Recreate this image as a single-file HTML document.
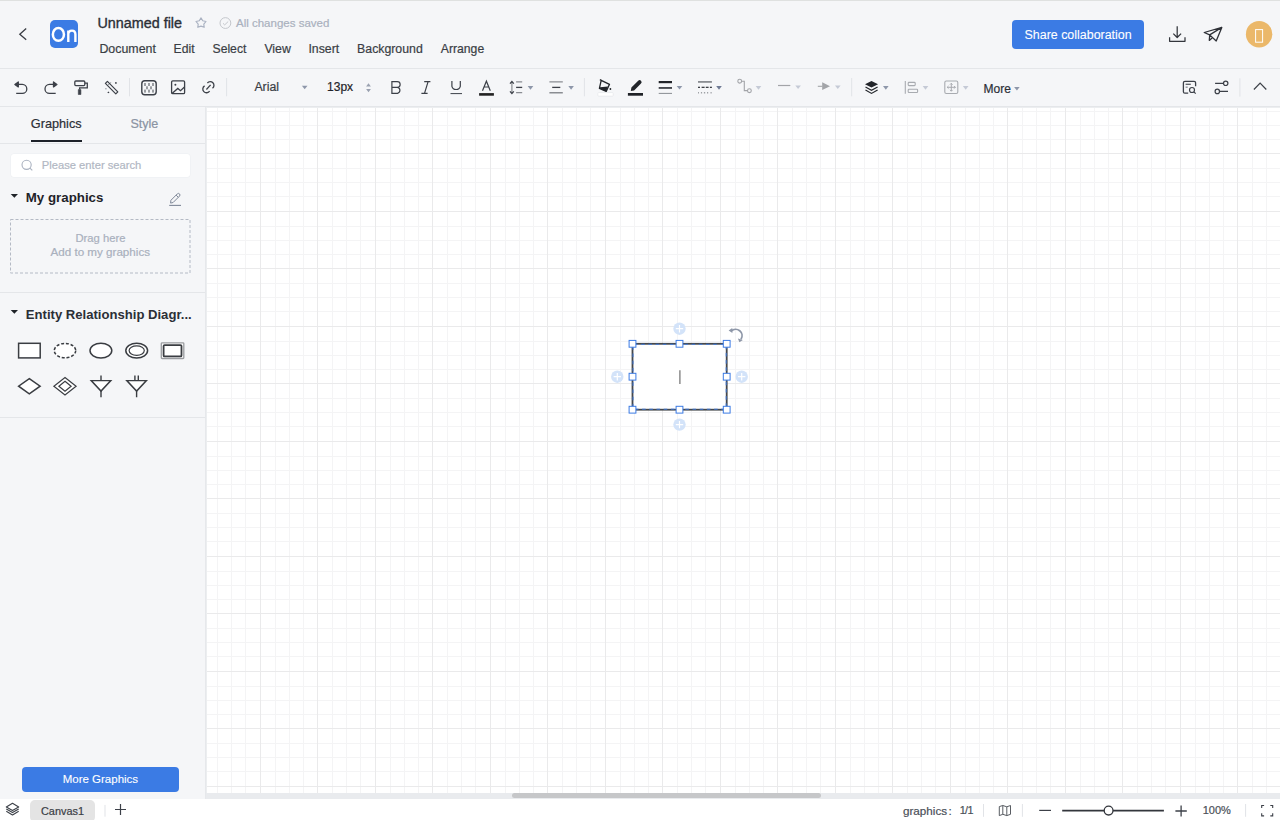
<!DOCTYPE html>
<html><head><meta charset="utf-8">
<style>
*{box-sizing:border-box;margin:0;padding:0}
html,body{width:1280px;height:820px;overflow:hidden;background:#f5f6f8;font-family:"Liberation Sans",sans-serif;color:#2b2f36}
.a{position:absolute}
.t{position:absolute;white-space:nowrap;font-family:"Liberation Sans",sans-serif}
svg{position:absolute;overflow:visible}
.car{position:absolute;width:0;height:0;border-left:2.5px solid transparent;border-right:2.5px solid transparent;border-top:3px solid #8e97aa}
.car.l{border-top-color:#c9cdd8}
.md{-webkit-text-stroke:0.2px currentColor}
.sep{position:absolute;width:1px;background:#e1e3e7}
</style></head><body>
<!-- top line -->
<div class="a" style="left:0;top:0;width:1280px;height:1px;background:#dfe1e0"></div>
<!-- header -->
<div class="a" style="left:0;top:68px;width:1280px;height:1px;background:#e4e6e9"></div>
<div class="a" style="left:0;top:106px;width:1280px;height:1px;background:#e4e6e9"></div>
<svg style="left:0;top:0" width="40" height="60"><path d="M26.2 28.6L19.8 34.2L26.2 39.8" stroke="#3a3d44" stroke-width="1.3" fill="none"/></svg>
<div class="a" style="left:50px;top:20.1px;width:28px;height:28.3px;border-radius:5px;background:#3b7be4;overflow:hidden"></div>
<svg style="left:0;top:0" width="90" height="60"><ellipse cx="58.4" cy="34.45" rx="5.55" ry="6.4" stroke="#fff" stroke-width="2.5" fill="none"/>
<path d="M68.3 30.4V42M68.3 34.6C68.3 32 69.8 30.6 72 30.6C74.3 30.6 75.4 32 75.4 34.6V42" stroke="#fff" stroke-width="2.4" fill="none"/></svg>
<div class="t md" style="left:97.5px;top:15.5px;font-size:14.35px;line-height:14.35px;color:#2b2f36;-webkit-text-stroke:0.35px #2b2f36">Unnamed file</div>
<svg style="left:0;top:0" width="240" height="40"><path d="M201 17.9L202.75 20.8L206 21.5L203.8 24.1L204.2 27.3L201 26.1L197.8 27.3L198.2 24.1L196 21.5L199.25 20.8Z" stroke="#aab2c2" stroke-width="1.15" fill="none" stroke-linejoin="round"/>
<circle cx="225.4" cy="23.05" r="5.4" stroke="#c4c7cc" stroke-width="1" fill="none"/><path d="M223 23.3L224.7 24.9L228.2 21.5" stroke="#c4c7cc" stroke-width="1" fill="none"/></svg>
<div class="t md" style="left:236px;top:17.8px;font-size:11.5px;line-height:11.5px;color:#aab1be">All changes saved</div>
<div class="t md" style="left:99.4px;top:42.9px;font-size:12.4px;line-height:12.4px;color:#3a3e45">Document</div>
<div class="t md" style="left:173.6px;top:42.9px;font-size:12.2px;line-height:12.2px;color:#3a3e45">Edit</div>
<div class="t md" style="left:212.5px;top:42.9px;font-size:12.2px;line-height:12.2px;color:#3a3e45">Select</div>
<div class="t md" style="left:264.4px;top:42.9px;font-size:12.3px;line-height:12.3px;color:#3a3e45">View</div>
<div class="t md" style="left:308.4px;top:42.9px;font-size:12.3px;line-height:12.3px;color:#3a3e45">Insert</div>
<div class="t md" style="left:357.1px;top:42.9px;font-size:12.3px;line-height:12.3px;color:#3a3e45">Background</div>
<div class="t md" style="left:440.8px;top:42.9px;font-size:12.2px;line-height:12.2px;color:#3a3e45">Arrange</div>
<!-- header right -->
<div class="a" style="left:1012px;top:19.8px;width:132.4px;height:28.9px;border-radius:4px;background:#3b7be4"></div>
<div class="t" style="left:1024.5px;top:29.2px;font-size:12.44px;line-height:12.44px;color:#fff;-webkit-text-stroke:0.1px #fff">Share collaboration</div>
<svg style="left:0;top:0" width="1280" height="60">
<path d="M1177.2 26.3V37.5M1173.3 33.6L1177.2 37.5L1181.1 33.6M1169.6 37.3V41.3H1185V37.3" stroke="#33363c" stroke-width="1.25" fill="none" stroke-linejoin="round"/>
<path d="M1204.2 32.5L1221.8 27.4L1216.2 41L1209.7 34.9ZM1221.8 27.4L1209.7 34.9L1209.3 40.4L1212.1 38.1" stroke="#2e3137" stroke-width="1.3" fill="none" stroke-linejoin="round"/>
<circle cx="1259.1" cy="34.2" r="13.2" fill="#ebb86a"/>
<rect x="1255.6" y="29.6" width="7" height="12.6" stroke="#fff" stroke-width="1" fill="none"/>
</svg>
<!-- toolbar -->
<svg style="left:0;top:0" width="1280" height="110">
<g fill="none" stroke="#3c4048" stroke-width="1.3">
<!-- undo -->
<path d="M17.5 84.4H22.3A4.5 4.5 0 0 1 22.3 93.4H16.2"/>
<path d="M14.9 84.4L18.3 81.9V86.9Z" fill="#3c4048" stroke-linejoin="round"/>
<!-- redo -->
<path d="M54.3 84.4H49.5A4.5 4.5 0 0 0 49.5 93.4H55.7"/>
<path d="M56.9 84.4L53.5 81.9V86.9Z" fill="#3c4048" stroke-linejoin="round"/>
<!-- painter -->
<rect x="74.8" y="81" width="10" height="4.6" rx="1"/>
<path d="M84.8 83.2H87.3V87.8H79.6V89.6"/>
<path d="M78.3 89.6H80.9V94.5H78.3Z" fill="#3c4048" stroke-width="0.6"/>
<!-- magic -->
<path d="M105.4 83.4L107.4 81.4L117.8 91.8L115.8 93.8Z" stroke-width="1.2" stroke-linejoin="round"/>
<path d="M108.6 84.6L110.6 82.6" stroke-width="1"/>
</g>
<circle cx="115.9" cy="82.9" r="0.9" fill="#3c4048"/><circle cx="105.9" cy="88.8" r="0.8" fill="#9aa0a8"/>
<path d="M107.3 92.4L108.4 91.5L109.5 92.4L108.4 93.3Z" fill="#3c4048"/>
<line x1="129.5" y1="78" x2="129.5" y2="96.3" stroke="#e1e3e7"/>
<!-- checker -->
<rect x="141.8" y="80.7" width="14.4" height="14" rx="3" fill="none" stroke="#3c4048" stroke-width="1.4"/>
<g fill="#9a9da2"><rect x="144" y="83" width="2" height="3"/><rect x="148" y="83" width="2" height="3"/><rect x="152" y="83" width="2" height="3"/>
<rect x="146" y="86.3" width="2" height="3"/><rect x="150" y="86.3" width="2" height="3"/>
<rect x="144" y="89.6" width="2" height="3"/><rect x="148" y="89.6" width="2" height="3"/><rect x="152" y="89.6" width="2" height="3"/></g>
<!-- image -->
<g fill="none" stroke="#3c4048" stroke-width="1.3">
<rect x="171.6" y="80.8" width="13" height="12.8" rx="1.2"/>
<path d="M172 93.4L177.8 88.4L180.5 90.7L184.5 87"/>
<!-- link -->
<path d="M207.4 83.0A3.7 3.7 0 1 1 212.5 88.3"/>
<path d="M204.6 85.9A3.7 3.7 0 1 0 209.6 91.1"/>
<path d="M206.4 89.5L210.6 84.9"/>
</g>
<circle cx="175.4" cy="84.7" r="1" fill="#3c4048"/>
<line x1="226.6" y1="78" x2="226.6" y2="96.3" stroke="#e1e3e7"/>
<!-- spinner -->
<path d="M366.1 86.4L368.5 83.3L370.9 86.4ZM366.1 89.1L368.5 92.2L370.9 89.1Z" fill="#9aa1b0"/>
<g fill="none" stroke="#3c4048" stroke-width="1.2">
<!-- B -->
<path d="M391.9 81.6H397.3A2.8 2.8 0 0 1 397.3 87.3H391.9ZM391.9 87.3H397.6A3.1 3.1 0 0 1 397.6 93.3H391.9Z"/>
<!-- I -->
<path d="M424.2 81.6H430.4M421.4 93.4H427.6M428.1 81.6L424.5 93.4"/>
<!-- U -->
<path d="M451.9 80.9V86.3A4.35 4.35 0 0 0 460.3 86.3V80.9"/>
<path d="M450.5 93.6H462" stroke-width="1"/>
<!-- A -->
<path d="M482.5 90.8L486.4 81.2L490.3 90.8M484 87H488.8"/>
</g>
<rect x="479.1" y="93.1" width="14.8" height="2.6" fill="#222"/>
<!-- line height -->
<g fill="none" stroke-width="1.2">
<path d="M511.9 82V93" stroke="#8a8d92"/><path d="M510 83.6L511.9 81.5L513.8 83.6M510 91.4L511.9 93.5L513.8 91.4" stroke="#3c4048" stroke-width="1.3"/>
<path d="M516.1 81.8H522.2M516.1 92.7H522.2" stroke="#8a8d92" stroke-width="1.3"/><path d="M516.1 87.4H522.2" stroke="#3c4048" stroke-width="1.3"/>
<!-- align -->
<path d="M549.4 81.9H562.8M549.4 92.7H562.8" stroke="#8a8d92" stroke-width="1.4"/><path d="M552.2 87.4H560.3" stroke="#3c4048" stroke-width="1.3"/>
</g>
<line x1="584.4" y1="78" x2="584.4" y2="96.3" stroke="#e1e3e7"/>
<!-- bucket -->
<g fill="none" stroke="#22252a" stroke-width="1.3" stroke-linejoin="round">
<path d="M601.2 80.3L609.5 84.3L606.2 91.4L599.4 88.3Z"/><path d="M601.2 80.3L599.9 79.6"/>
</g>
<path d="M600 87.2L608 86.5L606.2 91.4L599.4 88.3Z" fill="#22252a"/>
<circle cx="610.4" cy="89" r="0.9" fill="#22252a"/>
<rect x="597.8" y="92.6" width="15.4" height="3.6" rx="0.8" fill="#fff" stroke="#e6e8eb" stroke-width="0.8"/>
<!-- pen -->
<path d="M630.8 90.9L631.4 87.6L638.2 80.8A1.9 1.9 0 0 1 641 83.6L634.1 90.4Z" fill="#22252a"/>
<rect x="627.9" y="93" width="15.1" height="2.7" fill="#1f2227"/>
<!-- line weight -->
<rect x="658.7" y="81" width="13.3" height="2.2" fill="#22252a"/>
<rect x="658.7" y="87.1" width="13.3" height="1.7" fill="#33363c"/>
<rect x="658.7" y="92.9" width="13.3" height="0.9" fill="#7d8187"/>
<!-- dash -->
<rect x="698" y="81" width="13.9" height="1.8" fill="#8a8d92"/>
<g fill="#3c3f45"><rect x="698" y="86.7" width="2" height="1.3"/><rect x="701.6" y="86.7" width="3" height="1.3"/><rect x="705.8" y="86.7" width="2.8" height="1.3"/><rect x="709.9" y="86.7" width="2" height="1.3"/></g>
<g fill="#8a8d92"><rect x="698" y="92.2" width="1" height="1.2"/><rect x="700.9" y="92.2" width="1.2" height="1.2"/><rect x="703.9" y="92.2" width="1.3" height="1.2"/><rect x="707" y="92.2" width="1.2" height="1.2"/><rect x="710.5" y="92.2" width="1.2" height="1.2"/></g>
<!-- connector -->
<g fill="none" stroke="#a2a4a8" stroke-width="1.1">
<circle cx="739.7" cy="81.2" r="1.9"/><circle cx="749.4" cy="90.7" r="1.9"/>
<path d="M741.6 81.3H744.3V90.6H747.5"/>
<!-- line -->
<path d="M778 85.5H790.3" stroke-width="1.2"/>
<path d="M817.8 86.3H822.5"/>
</g>
<path d="M822.2 82.3L830 86.2L822.2 90Z" fill="#a2a4a8"/>
<line x1="851.7" y1="78" x2="851.7" y2="96.3" stroke="#e1e3e7"/>
<!-- layers -->
<path d="M871.5 80.9L878.1 84.3L871.5 87.6L865 84.3Z" fill="#22252a"/>
<path d="M865.5 87L871.5 90.2L877.6 87M865.5 90L871.5 93.4L877.6 90" fill="none" stroke="#22252a" stroke-width="1.2"/>
<!-- align left -->
<g fill="none" stroke="#a8abb0" stroke-width="1.1">
<path d="M905.3 81V93.8"/>
<rect x="908.2" y="82.4" width="7" height="3.2" rx="0.8"/>
<rect x="908.2" y="89.2" width="9.4" height="3.3" rx="0.8"/>
<!-- transform -->
<rect x="944.8" y="81" width="13" height="12.5" rx="1.5"/>
<path d="M951.3 83.3V91.2M947.2 87.3H955.4M950 84.6L951.3 83.3L952.6 84.6M950 89.9L951.3 91.2L952.6 89.9M948.5 86L947.2 87.3L948.5 88.6M954.1 86L955.4 87.3L954.1 88.6" stroke-width="1"/>
</g>
<!-- doc search -->
<g fill="none" stroke="#3c4048" stroke-width="1.3">
<path d="M1195.6 86.2V82.8A1.5 1.5 0 0 0 1194.1 81.3H1184.9A1.5 1.5 0 0 0 1183.4 82.8V91.7A1.5 1.5 0 0 0 1184.9 93.2H1188.2"/>
<path d="M1185.6 84.3H1190.8" stroke="#5a5e65"/><path d="M1185.6 87.2H1187.7" stroke="#8a8e94"/>
<circle cx="1192" cy="90" r="2.5" stroke-width="1.2"/><path d="M1193.9 91.9L1195.7 93.6" stroke-width="1.2"/>
<!-- sliders -->
<path d="M1215.1 83.3H1223.5M1219.5 91.4H1228" stroke-width="1.2"/>
<circle cx="1225.7" cy="83.3" r="2.2" stroke-width="1.2"/><circle cx="1217.3" cy="91.4" r="2.2" stroke-width="1.2"/>
<path d="M1253.9 89.5L1260.1 83.2L1266.3 89.5" stroke-width="1.2"/>
</g>
<line x1="1239.9" y1="78.3" x2="1239.9" y2="96.6" stroke="#e1e3e7"/>
<path d="M301.9 85.7H307.5L304.7 89.3Z" fill="#8e97aa"/>
<path d="M527.7 86.1H533.3L530.5 89.7Z" fill="#8e97aa"/>
<path d="M568.3 86.1H573.9L571.1 89.7Z" fill="#8e97aa"/>
<path d="M676.7 85.9H682.3L679.5 89.5Z" fill="#8e97aa"/>
<path d="M716.2 86.1H721.8L719.0 89.7Z" fill="#6f7a94"/>
<path d="M755.7 86.1H761.3L758.5 89.7Z" fill="#c5cad6"/>
<path d="M795.3 85.5H800.9L798.1 89.1Z" fill="#c5cad6"/>
<path d="M835.0 85.5H840.6L837.8 89.1Z" fill="#c5cad6"/>
<path d="M883.0 86.1H888.6L885.8 89.7Z" fill="#8e97aa"/>
<path d="M922.7 86.1H928.3L925.5 89.7Z" fill="#c5cad6"/>
<path d="M962.9 86.1H968.5L965.7 89.7Z" fill="#c5cad6"/>
<path d="M1014.1 86.9H1019.7L1016.9 90.5Z" fill="#8e97aa"/>
</svg>
<div class="t md" style="left:254.4px;top:80.5px;font-size:12.3px;line-height:12.3px;color:#3a3e45">Arial</div>
<div class="t md" style="left:327.1px;top:80.7px;font-size:12px;line-height:12px;color:#1f2329">13px</div>
<div class="t md" style="left:983.5px;top:83px;font-size:12px;line-height:12px;color:#2b2f36">More</div>
<!-- sidebar -->
<div class="a" style="left:205px;top:107px;width:1px;height:692px;background:#e6e8eb"></div>
<div class="t md" style="left:30.8px;top:117.5px;font-size:12.7px;line-height:12.7px;color:#2b2f36">Graphics</div>
<div class="a" style="left:30.8px;top:140px;width:51px;height:2px;background:#1d2129"></div>
<div class="t md" style="left:130.4px;top:117.5px;font-size:12.55px;line-height:12.55px;color:#8a93a3">Style</div>
<div class="a" style="left:0;top:143px;width:205px;height:1px;background:#e4e6e9"></div>
<div class="a" style="left:11px;top:154px;width:179px;height:22.5px;border-radius:3px;background:#fff;box-shadow:0 0 0 0.5px #eceef1"></div>
<svg style="left:0;top:0" width="205" height="420">
<circle cx="26.6" cy="164.8" r="4.6" stroke="#aab2c0" stroke-width="1.1" fill="none"/><path d="M29.9 168.1L32.3 170.4" stroke="#aab2c0" stroke-width="1.1"/>
<path d="M10.7 194L18 194L14.35 197.7Z" fill="#1f2329"/>
<path d="M170.6 203.1L170.9 200.3L177.3 193.9A1.2 1.2 0 0 1 179.5 196.1L173.1 202.5Z M176.1 195.1L178.3 197.3" stroke="#7f8898" stroke-width="1" fill="none" stroke-linejoin="round"/>
<path d="M169.2 205.4H181" stroke="#7f8898" stroke-width="1.1"/>
<rect x="10.5" y="219.5" width="179.5" height="53.5" fill="none" stroke="#b4bac5" stroke-width="1" stroke-dasharray="3 2"/>
<line x1="0" y1="292.5" x2="205" y2="292.5" stroke="#e4e6e9"/>
<path d="M10.7 310L18 310L14.35 313.7Z" fill="#1f2329"/>
<g fill="#fff" stroke="#3a3d42" stroke-width="1.5">
<rect x="18.6" y="343.3" width="21.6" height="14.6"/>
<ellipse cx="65" cy="350.6" rx="10.7" ry="7.2" stroke-dasharray="3 1.8"/>
<ellipse cx="100.9" cy="350.6" rx="10.9" ry="7.3"/>
<ellipse cx="136.7" cy="350.6" rx="10.9" ry="7.3"/>
<ellipse cx="136.7" cy="350.6" rx="7.6" ry="4.7" stroke-width="1.2"/>
<rect x="161.3" y="342.8" width="22.5" height="15.7" rx="0.8" stroke="#9a9ca0" stroke-width="1.3"/>
<rect x="163.6" y="345.1" width="17.9" height="11.3" rx="1" stroke-width="1.8"/>
<path d="M29.3 378.6L40.1 386.2L29.3 393.8L18.6 386.2Z"/>
<path d="M65 377.5L76.1 386.2L65 395L53.9 386.2Z" stroke-width="1.2"/>
<path d="M65 381.3L71.1 386.2L65 391.2L58.9 386.2Z" stroke-width="1.2"/>
<path d="M91.2 380.6H110.8L101 391.1Z" stroke-width="1.4"/><path d="M101 375.6V380.6M101 391.1V397.2" stroke-width="1.4"/>
<path d="M126.8 380.6H146.4L136.6 391.1Z" stroke-width="1.4"/><path d="M136.6 391.1V397.2M134.9 375.6V380.6M138.3 375.6V380.6" stroke-width="1.4"/>
</g>
<line x1="0" y1="417.5" x2="205" y2="417.5" stroke="#e4e6e9"/>
</svg>
<div class="t md" style="left:41.8px;top:160px;font-size:11.2px;line-height:11.2px;color:#b1b7c3">Please enter search</div>
<div class="t" style="left:25.8px;top:191.3px;font-size:13.3px;line-height:13.3px;color:#1f2329;font-weight:bold">My graphics</div>
<div class="t md" style="left:75.5px;top:233.2px;font-size:11.24px;line-height:11.24px;color:#a9b0bd">Drag here</div>
<div class="t md" style="left:50.5px;top:245.8px;font-size:11.64px;line-height:11.64px;color:#a9b0bd">Add to my graphics</div>
<div class="t" style="left:25.8px;top:307.5px;font-size:13.1px;line-height:13.1px;color:#2b2f36;font-weight:bold">Entity Relationship Diagr...</div>
<div class="a" style="left:22px;top:767px;width:156.5px;height:24.6px;border-radius:4px;background:#3b7be4"></div>
<div class="t" style="left:62.7px;top:773.8px;font-size:11.5px;line-height:11.5px;color:#fff;-webkit-text-stroke:0.1px #fff">More Graphics</div>
<!-- canvas -->
<div class="a" style="left:206px;top:107px;width:1074px;height:686px;background:#fff;overflow:hidden">
<svg width="1074" height="686" style="position:absolute;left:0;top:0"><path d="M11.5 0V686M25.5 0V686M39.5 0V686M69.5 0V686M83.5 0V686M97.5 0V686M126.5 0V686M140.5 0V686M154.5 0V686M184.5 0V686M198.5 0V686M212.5 0V686M241.5 0V686M255.5 0V686M269.5 0V686M299.5 0V686M313.5 0V686M327.5 0V686M356.5 0V686M370.5 0V686M384.5 0V686M414.5 0V686M428.5 0V686M442.5 0V686M471.5 0V686M485.5 0V686M499.5 0V686M529.5 0V686M543.5 0V686M557.5 0V686M586.5 0V686M600.5 0V686M614.5 0V686M644.5 0V686M658.5 0V686M672.5 0V686M701.5 0V686M715.5 0V686M729.5 0V686M759.5 0V686M773.5 0V686M787.5 0V686M816.5 0V686M830.5 0V686M844.5 0V686M874.5 0V686M888.5 0V686M902.5 0V686M931.5 0V686M945.5 0V686M959.5 0V686M989.5 0V686M1003.5 0V686M1017.5 0V686M1046.5 0V686M1060.5 0V686M0 4.5H1074M0 18.5H1074M0 32.5H1074M0 61.5H1074M0 75.5H1074M0 89.5H1074M0 119.5H1074M0 133.5H1074M0 147.5H1074M0 176.5H1074M0 190.5H1074M0 204.5H1074M0 234.5H1074M0 248.5H1074M0 262.5H1074M0 291.5H1074M0 305.5H1074M0 319.5H1074M0 349.5H1074M0 363.5H1074M0 377.5H1074M0 406.5H1074M0 420.5H1074M0 434.5H1074M0 464.5H1074M0 478.5H1074M0 492.5H1074M0 521.5H1074M0 535.5H1074M0 549.5H1074M0 579.5H1074M0 593.5H1074M0 607.5H1074M0 636.5H1074M0 650.5H1074M0 664.5H1074" stroke="#f4f4f5" stroke-width="1" fill="none"/><path d="M54.5 0V686M111.5 0V686M169.5 0V686M226.5 0V686M284.5 0V686M341.5 0V686M399.5 0V686M456.5 0V686M514.5 0V686M571.5 0V686M629.5 0V686M686.5 0V686M744.5 0V686M801.5 0V686M859.5 0V686M916.5 0V686M974.5 0V686M1031.5 0V686M0 46.5H1074M0 104.5H1074M0 161.5H1074M0 219.5H1074M0 276.5H1074M0 334.5H1074M0 391.5H1074M0 449.5H1074M0 506.5H1074M0 564.5H1074M0 621.5H1074M0 679.5H1074" stroke="#eaeaeb" stroke-width="1" fill="none"/></svg>
</div>
<div class="a" style="left:206px;top:793px;width:1074px;height:6px;background:#e9ebee"></div>
<div class="a" style="left:206px;top:107px;width:1074px;height:1px;background:#eceef0"></div>
<div class="a" style="left:206px;top:107px;width:1px;height:686px;background:#eceef0"></div>
<div class="a" style="left:512px;top:793.4px;width:308.6px;height:5px;border-radius:3px;background:#c6c7c9"></div>
<!-- shape -->
<svg style="left:0;top:0" width="1280" height="820">
<rect x="632.5" y="343.8" width="94.2" height="65.9" fill="#fff" stroke="#45484c" stroke-width="1.8"/>
<rect x="633" y="344.3" width="93.2" height="64.9" fill="none" stroke="#3b7be4" stroke-width="0.9" stroke-dasharray="3.6 3.6" stroke-dashoffset="-1"/>
<g fill="#fff" stroke="#3b7be4" stroke-width="1">
<rect x="629.1" y="340.4" width="6.8" height="6.8"/><rect x="676.1" y="340.4" width="6.8" height="6.8"/><rect x="723.3" y="340.4" width="6.8" height="6.8"/>
<rect x="629.1" y="373.3" width="6.8" height="6.8"/><rect x="723.3" y="373.3" width="6.8" height="6.8"/>
<rect x="629.1" y="406.3" width="6.8" height="6.8"/><rect x="676.1" y="406.3" width="6.8" height="6.8"/><rect x="723.3" y="406.3" width="6.8" height="6.8"/>
</g>
<g fill="#d3e3f9"><circle cx="679.5" cy="328.7" r="6.2"/><circle cx="617.3" cy="376.7" r="6.2"/><circle cx="741.7" cy="376.7" r="6.2"/><circle cx="679.5" cy="424.6" r="6.2"/></g>
<path d="M679.5 325V332.4M675.8 328.7H683.2M617.3 373V380.4M613.6 376.7H621M741.7 373V380.4M738 376.7H745.4M679.5 420.9V428.3M675.8 424.6H683.2" stroke="#fff" stroke-width="1.2"/>
<path d="M731.2 331.1A6.4 6.4 0 0 1 741 339.2" stroke="#8e97a8" stroke-width="1.8" fill="none"/>
<path d="M728.6 330.6L732.3 327.9L732.4 333Z M737.9 338.6L742.9 339.9L739.4 342.2Z" fill="#8e97a8"/>
<line x1="679.9" y1="370.2" x2="679.9" y2="383.9" stroke="#7a7a7a" stroke-width="1.3"/>
</svg>
<!-- bottom bar -->
<div class="a" style="left:0;top:799px;width:1280px;height:21px;background:#fff"></div>
<svg style="left:0;top:0" width="1280" height="820">
<g fill="none" stroke="#3c4048" stroke-width="1.1" stroke-linejoin="round">
<path d="M12.5 803.3L18.7 806.9L12.5 810.5L6.3 806.9Z"/>
<path d="M6.3 809L12.5 812.6L18.7 809M6.3 811.3L12.5 814.9L18.7 811.3"/>
</g>
</svg>
<div class="a" style="left:30.4px;top:800.3px;width:64.4px;height:22px;border-radius:5px;background:#e4e4e4"></div>
<div class="t md" style="left:41px;top:805.6px;font-size:10.9px;line-height:10.9px;color:#3a3e45">Canvas1</div>
<svg style="left:0;top:0" width="1280" height="820">
<line x1="105" y1="804.9" x2="105" y2="816.7" stroke="#e1e3e7"/>
<path d="M120.5 804V815M115 809.5H126" stroke="#3c4048" stroke-width="1.2"/>
<line x1="983.5" y1="804" x2="983.5" y2="816.8" stroke="#e1e3e7"/>
<path d="M999.3 806.6L1002.8 805.5L1006.8 806.8L1010.5 805.5V814.3L1006.8 815.6L1002.8 814.3L999.3 815.6ZM1002.8 805.5V814.3M1006.8 806.8V815.6" fill="none" stroke="#50545b" stroke-width="0.95" stroke-linejoin="round"/>
<line x1="1022.4" y1="804" x2="1022.4" y2="816.8" stroke="#e1e3e7"/>
<path d="M1039.2 810.4H1051" stroke="#3c4048" stroke-width="1.2"/>
<path d="M1062.2 810.6H1163.9" stroke="#33363c" stroke-width="1.8"/>
<circle cx="1108.6" cy="810.6" r="4.4" fill="#fff" stroke="#33363c" stroke-width="1.3"/>
<path d="M1181.1 805.4V816.6M1175.4 811H1186.8" stroke="#3c4048" stroke-width="1.3"/>
<line x1="1245.6" y1="804" x2="1245.6" y2="816.8" stroke="#e1e3e7"/>
<path d="M1261.7 808.1V805.5H1264.1M1270.3 805.5H1272.7V808.1M1272.7 813.3V815.9H1270.3M1264.1 815.9H1261.7V813.3" fill="none" stroke="#3c4048" stroke-width="1.1"/>
</svg>
<div class="t md" style="left:903px;top:805.1px;font-size:11.67px;line-height:11.67px;color:#4a4f58">graphics</div>
<div class="t md" style="left:948.5px;top:805.1px;font-size:11.67px;line-height:11.67px;color:#4a4f58">:</div>
<div class="t md" style="left:959.8px;top:805.4px;font-size:10.8px;line-height:10.8px;color:#4a4f58;letter-spacing:-0.7px">1/1</div>
<div class="t md" style="left:1202.7px;top:805.4px;font-size:11px;line-height:11px;color:#4a4f58">100%</div>
</body></html>
